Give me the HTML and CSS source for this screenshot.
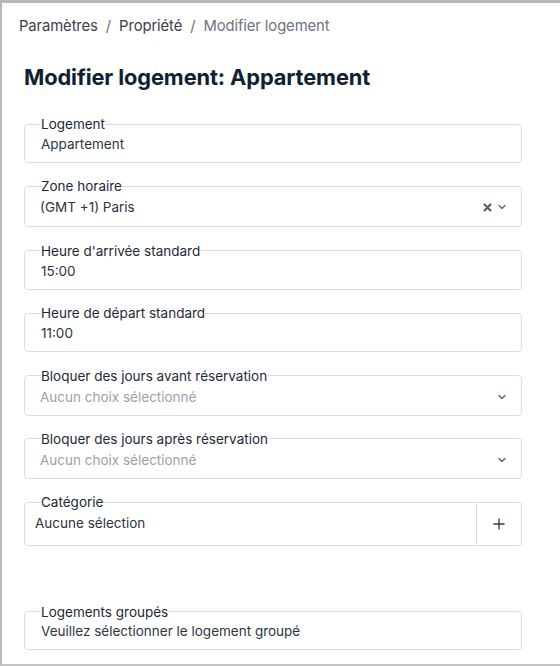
FILE: index.html
```html
<!DOCTYPE html>
<html lang="fr">
<head>
<meta charset="utf-8">
<link rel="stylesheet" href="styles.css">
</head>
<body>
<div class="page">
  <nav class="crumbs">
    <span class="crumb">Paramètres</span><span class="sep">/</span><span class="crumb">Propriété</span><span class="sep">/</span><span class="crumb current">Modifier logement</span>
  </nav>
  <h1 class="title">Modifier logement: Appartement</h1>
  <form class="form">
    <fieldset class="field">
      <legend>Logement</legend>
      <div class="value pad-l16 pt4 h31">Appartement</div>
    </fieldset>
    <fieldset class="field">
      <legend>Zone horaire</legend>
      <div class="value pad-l15 pt5 h33 select">
        <span class="grow">(GMT +1) Paris</span>
        <svg class="clear" width="9" height="9" viewBox="0 0 9 9"><path d="M1.5 1.5 L7.5 7.5 M7.5 1.5 L1.5 7.5" stroke="#4b5b68" stroke-width="2" stroke-linecap="round"/></svg>
        <svg class="chev" width="8" height="6" viewBox="0 0 8 6"><path d="M1 1.5 L4 4.5 L7 1.5" fill="none" stroke="#5a6b78" stroke-width="1.4" stroke-linecap="round" stroke-linejoin="round"/></svg>
      </div>
    </fieldset>
    <fieldset class="field">
      <legend>Heure d'arrivée standard</legend>
      <div class="value pad-l16 pt4 h31">15:00</div>
    </fieldset>
    <fieldset class="field">
      <legend>Heure de départ standard</legend>
      <div class="value pad-l16 pt4 h31">11:00</div>
    </fieldset>
    <fieldset class="field">
      <legend>Bloquer des jours avant réservation</legend>
      <div class="value pad-l15 pt5 h32 select placeholder">
        <span class="grow">Aucun choix sélectionné</span>
        <svg class="chev" width="8" height="6" viewBox="0 0 8 6"><path d="M1 1.5 L4 4.5 L7 1.5" fill="none" stroke="#5a6b78" stroke-width="1.4" stroke-linecap="round" stroke-linejoin="round"/></svg>
      </div>
    </fieldset>
    <fieldset class="field">
      <legend>Bloquer des jours après réservation</legend>
      <div class="value pad-l15 pt5 h32 select placeholder">
        <span class="grow">Aucun choix sélectionné</span>
        <svg class="chev" width="8" height="6" viewBox="0 0 8 6"><path d="M1 1.5 L4 4.5 L7 1.5" fill="none" stroke="#5a6b78" stroke-width="1.4" stroke-linecap="round" stroke-linejoin="round"/></svg>
      </div>
    </fieldset>
    <fieldset class="field">
      <legend>Catégorie</legend>
      <div class="cat-row">
        <div class="value pad-l10 pt5 h36 grow">Aucune sélection</div>
        <div class="add">
          <svg width="12" height="12" viewBox="0 0 12 12"><path d="M6 0.5 V11.5 M0.5 6 H11.5" stroke="#2c3844" stroke-width="1.3"/></svg>
        </div>
      </div>
    </fieldset>
    <fieldset class="field grouped">
      <legend>Logements groupés</legend>
      <div class="value pad-l16 pt3 h30">Veuillez sélectionner le logement groupé</div>
    </fieldset>
  </form>
</div>
</body>
</html>
```

FILE: styles.css
```css
html, body {
  margin: 0;
  padding: 0;
  background: #ffffff;
}
body {
  font-family: Inter, "Liberation Sans", sans-serif;
  color: #1f2b37;
}
.page {
  box-sizing: border-box;
  width: 560px;
  height: 666px;
  border-top: 3px solid #b8b8b8;
  border-left: 2px solid #b8b8b8;
  border-bottom: 2px solid #c4c4c4;
  overflow: hidden;
}
.crumbs {
  padding: 14px 0 0 17px;
  font-size: 14.8px;
  line-height: 18px;
  color: #3b4048;
  letter-spacing: -0.1px;
}
.sep {
  margin: 0 8px;
  color: #6b7079;
}
.current {
  color: #6c7480;
}
.title {
  margin: 28px 0 0 22px;
  font-size: 21.8px;
  line-height: 28px;
  font-weight: 700;
  color: #0f2131;
  letter-spacing: -0.1px;
}
.form {
  margin: 26px 0 0 22px;
  width: 498px;
  display: flex;
  flex-direction: column;
  gap: 16.4px;
}
.field {
  margin: 0;
  padding: 0;
  border: 1px solid #dadee3;
  border-radius: 4px;
  min-width: 0;
}
.field legend {
  margin-left: 16px;
  padding: 0;
  font-size: 13.5px;
  line-height: 14px;
  color: #1d2a36;
}
.value {
  box-sizing: border-box;
  font-size: 13.5px;
  line-height: 18px;
  color: #2b3641;
}
.placeholder {
  color: #9aa1a9;
}
.select {
  display: flex;
  align-items: flex-start;
  padding-right: 15px;
}
.grow {
  flex: 1;
  min-width: 0;
}
.clear {
  margin-top: 5px;
  margin-right: 6px;
}
.chev {
  margin-top: 6px;
}
.pad-l16 { padding-left: 16px; }
.pad-l15 { padding-left: 15px; }
.pad-l10 { padding-left: 10px; }
.pt3 { padding-top: 3px; }
.pt4 { padding-top: 4px; }
.pt5 { padding-top: 5px; }
.h30 { height: 30px; }
.h31 { height: 31px; }
.h32 { height: 32px; }
.h33 { height: 33px; }
.h36 { height: 36px; }
.cat-row {
  display: flex;
  align-items: stretch;
}
.add {
  width: 44px;
  margin-top: -7px;
  border-left: 1px solid #dadee3;
  display: flex;
  align-items: center;
  justify-content: center;
}
.grouped {
  margin-top: 42px;
}
```
